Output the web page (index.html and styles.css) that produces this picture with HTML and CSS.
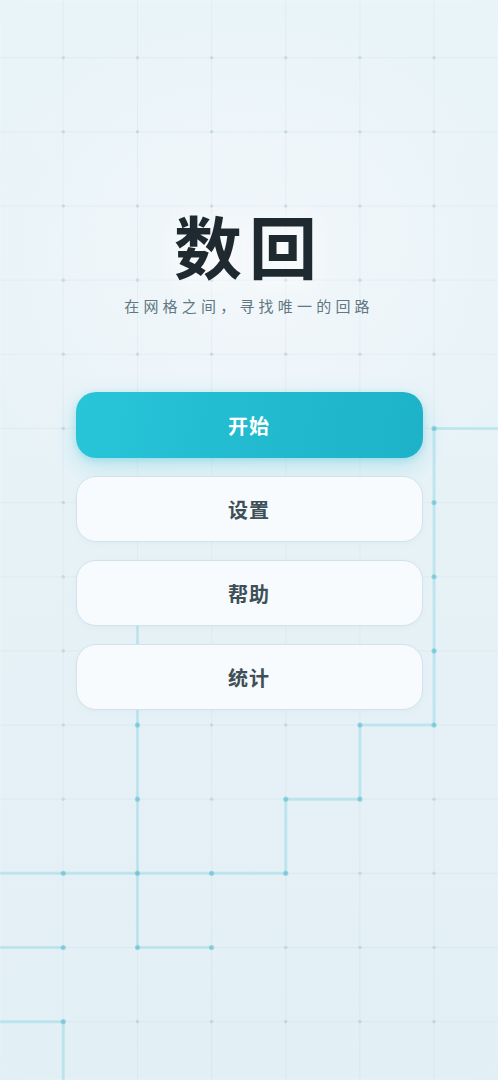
FILE: index.html
```html
<!DOCTYPE html>
<html lang="zh-CN">
<head>
<meta charset="utf-8">
<title>数回</title>
<link rel="stylesheet" href="styles.css">
</head>
<body>
<div class="screen">
  <svg class="bg-grid" viewBox="0 0 498 1080" width="498" height="1080" aria-hidden="true">
    <g class="grid-lines">
      <line x1="63.3" y1="0" x2="63.3" y2="1080"/>
      <line x1="137.45" y1="0" x2="137.45" y2="1080"/>
      <line x1="211.6" y1="0" x2="211.6" y2="1080"/>
      <line x1="285.75" y1="0" x2="285.75" y2="1080"/>
      <line x1="359.9" y1="0" x2="359.9" y2="1080"/>
      <line x1="434.05" y1="0" x2="434.05" y2="1080"/>
      <line x1="0" y1="57.7" x2="498" y2="57.7"/>
      <line x1="0" y1="131.85" x2="498" y2="131.85"/>
      <line x1="0" y1="206" x2="498" y2="206"/>
      <line x1="0" y1="280.15" x2="498" y2="280.15"/>
      <line x1="0" y1="354.3" x2="498" y2="354.3"/>
      <line x1="0" y1="428.45" x2="498" y2="428.45"/>
      <line x1="0" y1="502.6" x2="498" y2="502.6"/>
      <line x1="0" y1="576.75" x2="498" y2="576.75"/>
      <line x1="0" y1="650.9" x2="498" y2="650.9"/>
      <line x1="0" y1="725.05" x2="498" y2="725.05"/>
      <line x1="0" y1="799.2" x2="498" y2="799.2"/>
      <line x1="0" y1="873.35" x2="498" y2="873.35"/>
      <line x1="0" y1="947.5" x2="498" y2="947.5"/>
      <line x1="0" y1="1021.65" x2="498" y2="1021.65"/>
    </g>
    <g class="path-lines">
      <polyline points="510,428.45 434.05,428.45 434.05,725.05 359.9,725.05 359.9,799.2 285.75,799.2 285.75,873.35 -10,873.35"/>
      <polyline points="137.45,576.75 137.45,947.5 211.6,947.5"/>
      <polyline points="-10,947.5 63.3,947.5"/>
      <polyline points="-10,1021.65 63.3,1021.65 63.3,1090"/>
    </g>
    <g class="grid-dots" id="dots"></g>
    <g class="path-dots">
      <circle cx="434.05" cy="428.45" r="2.6"/>
      <circle cx="434.05" cy="502.6" r="2.6"/>
      <circle cx="434.05" cy="576.75" r="2.6"/>
      <circle cx="434.05" cy="650.9" r="2.6"/>
      <circle cx="434.05" cy="725.05" r="2.6"/>
      <circle cx="359.9" cy="725.05" r="2.6"/>
      <circle cx="359.9" cy="799.2" r="2.6"/>
      <circle cx="285.75" cy="799.2" r="2.6"/>
      <circle cx="285.75" cy="873.35" r="2.6"/>
      <circle cx="211.6" cy="873.35" r="2.6"/>
      <circle cx="137.45" cy="873.35" r="2.6"/>
      <circle cx="63.3" cy="873.35" r="2.6"/>
      <circle cx="137.45" cy="650.9" r="2.6"/>
      <circle cx="137.45" cy="725.05" r="2.6"/>
      <circle cx="137.45" cy="799.2" r="2.6"/>
      <circle cx="137.45" cy="947.5" r="2.6"/>
      <circle cx="211.6" cy="947.5" r="2.6"/>
      <circle cx="63.3" cy="947.5" r="2.6"/>
      <circle cx="63.3" cy="1021.65" r="2.6"/>
    </g>
  </svg>
  <div class="frame"></div>

  <main class="menu">
    <header class="brand">
      <h1 class="title">数回</h1>
      <p class="subtitle">在网格之间，寻找唯一的回路</p>
    </header>
    <nav class="actions">
      <button class="btn btn-primary">开始</button>
      <button class="btn btn-secondary">设置</button>
      <button class="btn btn-secondary">帮助</button>
      <button class="btn btn-secondary">统计</button>
    </nav>
  </main>
</div>
<script>
  (function () {
    var xs = [63.3, 137.45, 211.6, 285.75, 359.9, 434.05];
    var g = document.getElementById('dots');
    var ns = 'http://www.w3.org/2000/svg';
    for (var j = 0; j < 14; j++) {
      var y = 57.7 + 74.15 * j;
      for (var i = 0; i < xs.length; i++) {
        var c = document.createElementNS(ns, 'circle');
        c.setAttribute('cx', xs[i]);
        c.setAttribute('cy', y);
        c.setAttribute('r', '1.8');
        g.appendChild(c);
      }
    }
  })();
</script>
</body>
</html>
```

FILE: styles.css
```css
* { box-sizing: border-box; }

html, body {
  margin: 0;
  padding: 0;
  width: 498px;
  height: 1080px;
  overflow: hidden;
}

body {
  font-family: "Noto Sans CJK SC", "Noto Sans", sans-serif;
  background: #e6f2f7;
}

.screen {
  position: relative;
  width: 498px;
  height: 1080px;
  overflow: hidden;
  background:
    radial-gradient(ellipse 300px 260px at 50% 270px, rgba(244, 248, 250, 0.85), rgba(244, 248, 250, 0) 100%),
    linear-gradient(180deg, #e9f4f9 0%, #e7f2f7 50%, #e2eff5 100%);
}

.bg-grid {
  position: absolute;
  left: 0;
  top: 0;
  display: block;
}

.grid-lines line {
  stroke: rgba(150, 180, 195, 0.1);
  stroke-width: 1;
}

.path-lines polyline {
  fill: none;
  stroke: rgba(80, 200, 218, 0.24);
  stroke-width: 3;
  stroke-linejoin: round;
}

.grid-dots circle {
  fill: rgba(140, 168, 182, 0.28);
}

.path-dots circle {
  fill: rgba(70, 188, 206, 0.45);
}

.frame {
  position: absolute;
  inset: 0;
  border-radius: 26px;
  box-shadow: inset 0 0 0 1px rgba(255, 255, 255, 0.15);
  pointer-events: none;
}

.menu {
  position: relative;
  display: flex;
  flex-direction: column;
  align-items: center;
  padding-top: 205px;
}

.brand {
  display: flex;
  flex-direction: column;
  align-items: center;
}

.title {
  margin: 0;
  font-size: 68px;
  line-height: 80px;
  font-weight: 700;
  letter-spacing: 7px;
  color: #1e2a30;
  text-shadow: 0 4px 24px rgba(255, 255, 255, 0.9);
}

.subtitle {
  margin: 10px 0 0;
  font-size: 15px;
  line-height: 22px;
  letter-spacing: 4.2px;
  color: #617782;
}

.actions {
  display: flex;
  flex-direction: column;
  gap: 18px;
  margin-top: 75px;
  width: 347px;
}

.btn {
  height: 66px;
  border-radius: 20px;
  font-family: "Noto Sans CJK SC", "Noto Sans", sans-serif;
  font-size: 20px;
  font-weight: 700;
  letter-spacing: 1px;
  cursor: pointer;
}

.btn-primary {
  border: none;
  color: #ffffff;
  background: linear-gradient(100deg, #28c5d9 0%, #22bbd0 50%, #1db2c7 100%);
  box-shadow: 0 8px 22px rgba(40, 190, 212, 0.28), 0 2px 6px rgba(40, 170, 195, 0.2);
}

.btn-secondary {
  border: 1px solid #d2e3ea;
  color: #3e4f57;
  background: #f7fbfd;
  box-shadow: 0 2px 6px rgba(120, 160, 180, 0.06);
}
```
